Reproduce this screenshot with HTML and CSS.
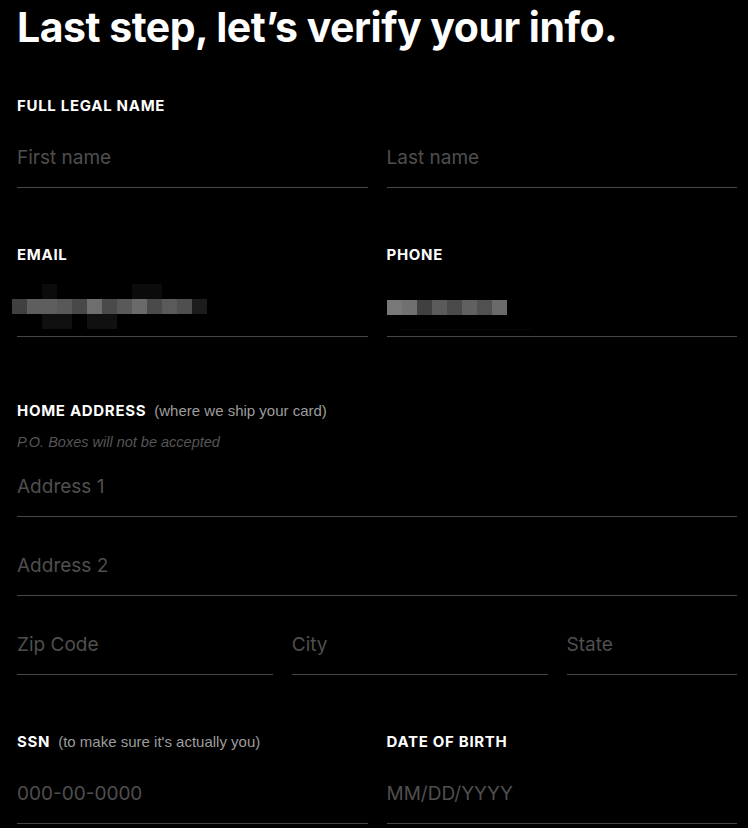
FILE: index.html
```html
<!DOCTYPE html>
<html lang="en">
<head>
<meta charset="utf-8">
<title>Verify your info</title>
<link rel="stylesheet" href="styles.css">
</head>
<body>
<main class="page">
  <h1 class="title">Last step, let’s verify your info.</h1>

  <section class="group group-first">
    <div class="label-row"><span class="label">FULL LEGAL NAME</span></div>
    <div class="grid2">
      <div class="field"><span>First name</span></div>
      <div class="field"><span>Last name</span></div>
    </div>
  </section>

  <section class="group">
    <div class="grid2 grid-top">
      <div>
        <div class="label-row"><span class="label">EMAIL</span></div>
        <div class="field field-gap">
          <svg class="redact redact-email" width="195" height="45" viewBox="0 0 195 45">
            <rect x="30" y="0" width="15" height="15" fill="#0b0b0b"/>
            <rect x="120" y="0" width="30" height="15" fill="#0b0b0b"/>
            <rect x="0" y="15" width="15" height="15" fill="#404040"/>
            <rect x="15" y="15" width="15" height="15" fill="#5e5e5e"/>
            <rect x="30" y="15" width="15" height="15" fill="#5e5e5e"/>
            <rect x="45" y="15" width="15" height="15" fill="#585858"/>
            <rect x="60" y="15" width="15" height="15" fill="#484848"/>
            <rect x="75" y="15" width="15" height="15" fill="#6e6e6e"/>
            <rect x="90" y="15" width="15" height="15" fill="#4a4a4a"/>
            <rect x="105" y="15" width="15" height="15" fill="#595959"/>
            <rect x="120" y="15" width="15" height="15" fill="#6a6a6a"/>
            <rect x="135" y="15" width="15" height="15" fill="#4a4a4a"/>
            <rect x="150" y="15" width="15" height="15" fill="#5a5a5a"/>
            <rect x="165" y="15" width="15" height="15" fill="#4f4f4f"/>
            <rect x="180" y="15" width="15" height="15" fill="#1c1c1c"/>
            <rect x="30" y="30" width="30" height="15" fill="#0f0f0f"/>
            <rect x="75" y="30" width="30" height="15" fill="#101010"/>
          </svg>
        </div>
      </div>
      <div>
        <div class="label-row"><span class="label">PHONE</span></div>
        <div class="field field-gap">
          <svg class="redact redact-phone" width="146" height="45" viewBox="0 0 146 45">
            <rect x="0" y="15" width="15" height="15" fill="#787878"/>
            <rect x="15" y="15" width="15" height="15" fill="#707070"/>
            <rect x="30" y="15" width="15" height="15" fill="#404040"/>
            <rect x="45" y="15" width="15" height="15" fill="#5a5a5a"/>
            <rect x="60" y="15" width="15" height="15" fill="#4a4a4a"/>
            <rect x="75" y="15" width="15" height="15" fill="#606060"/>
            <rect x="90" y="15" width="15" height="15" fill="#505050"/>
            <rect x="105" y="15" width="15" height="15" fill="#6a6a6a"/>
            <rect x="13" y="44" width="133" height="1" fill="#080808"/>
          </svg>
        </div>
      </div>
    </div>
  </section>

  <section class="group group-address">
    <div class="label-row"><span class="label">HOME ADDRESS</span><span class="hint">(where we ship your card)</span></div>
    <p class="note">P.O. Boxes will not be accepted</p>
    <div class="stack">
      <div class="field"><span>Address 1</span></div>
      <div class="field"><span>Address 2</span></div>
      <div class="grid3">
        <div class="field"><span>Zip Code</span></div>
        <div class="field"><span>City</span></div>
        <div class="field"><span>State</span></div>
      </div>
    </div>
  </section>

  <section class="group">
    <div class="grid2 grid-top">
      <div>
        <div class="label-row"><span class="label">SSN</span><span class="hint">(to make sure it's actually you)</span></div>
        <div class="field field-gap"><span>000-00-0000</span></div>
      </div>
      <div>
        <div class="label-row"><span class="label">DATE OF BIRTH</span></div>
        <div class="field field-gap"><span>MM/DD/YYYY</span></div>
      </div>
    </div>
  </section>
</main>
</body>
</html>
```

FILE: styles.css
```css
html, body {
  margin: 0;
  background: #000;
}

body {
  color: #fff;
  font-family: Inter, "Noto Sans", sans-serif;
}

.page {
  width: 720px;
  padding: 3px 11px 0 17px;
}

.title {
  margin: 0;
  font-size: 41px;
  line-height: 48px;
  font-weight: 700;
  letter-spacing: -0.5px;
}

.group {
  margin-top: 57px;
}

.group-first {
  margin-top: 45px;
}

.group-address {
  margin-top: 64px;
}

.label-row {
  display: flex;
  align-items: baseline;
  gap: 8px;
  height: 20px;
  line-height: 20px;
}

.label {
  font-size: 15px;
  font-weight: 700;
  letter-spacing: 0.7px;
  color: #fff;
}

.hint {
  font-family: "Liberation Sans", Arial, sans-serif;
  font-size: 15px;
  color: #9c9c9c;
}

.note {
  margin: 11px 0 0;
  font-family: "Liberation Sans", Arial, sans-serif;
  font-style: italic;
  font-size: 14.5px;
  line-height: 20px;
  color: #555;
}

.grid2 {
  display: grid;
  grid-template-columns: 1fr 1fr;
  column-gap: 19px;
  margin-top: 12px;
}

.grid2.grid-top {
  margin-top: 0;
}

.grid3 {
  display: grid;
  grid-template-columns: 3fr 3fr 2fr;
  column-gap: 19px;
}

.stack {
  display: flex;
  flex-direction: column;
  gap: 19px;
  margin-top: 5px;
}

.field {
  box-sizing: border-box;
  height: 60px;
  display: flex;
  align-items: center;
  border-bottom: 1px solid #474747;
  font-size: 19px;
  color: #4f4f4f;
}

.field-gap {
  margin-top: 12px;
}

.redact {
  display: block;
}

.redact-email {
  margin-left: -5px;
}

.redact-phone {
  margin-top: 1px;
}
```
